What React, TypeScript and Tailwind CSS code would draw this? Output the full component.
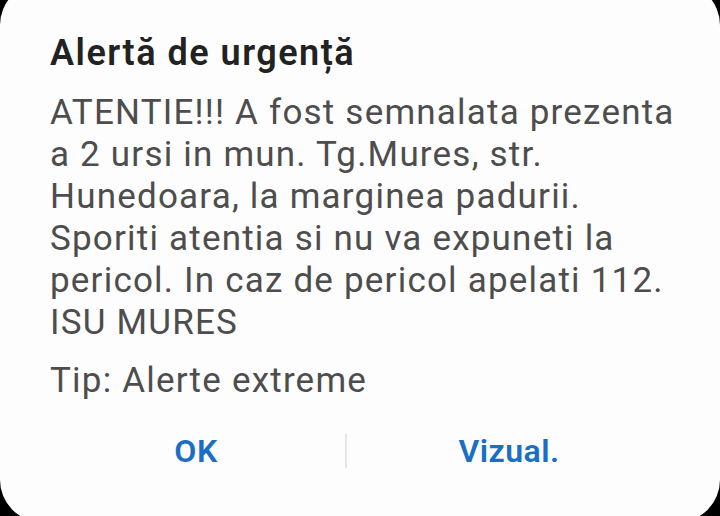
export default function App() {
  return (
    <div className="w-[720px] h-[516px] overflow-hidden bg-black">
      <div
        className="-mt-[17px] h-[539px] rounded-[42px] bg-[#fdfdfd] pt-[50px] pl-[50px]"
        style={{ fontFamily: 'Roboto, "Noto Sans", sans-serif' }}
      >
        <h1 className="text-[36px] leading-[40px] tracking-[1.5px] font-semibold text-[#222222] whitespace-nowrap">
          Alertă de urgență
        </h1>
        <p className="mt-[19px] text-[35px] leading-[42px] tracking-[1.2px] text-[#4d4d4d] whitespace-nowrap">
          ATENTIE!!! A fost semnalata prezenta
          <br />a 2 ursi in mun. Tg.Mures, str.
          <br />Hunedoara, la marginea padurii.
          <br />Sporiti atentia si nu va expuneti la
          <br />pericol. In caz de pericol apelati 112.
          <br />ISU MURES
        </p>
        <p className="mt-[16px] text-[35px] leading-[42px] tracking-[1.2px] text-[#4d4d4d]">
          Tip: Alerte extreme
        </p>
        <div className="mt-[24px] -ml-[3px] flex items-center">
          <button className="w-[298px] h-[50px] text-[32px] tracking-[0.5px] font-semibold text-[#1a6fc4]">
            OK
          </button>
          <div className="w-[2px] h-[34px] bg-[#e6e6e6]" />
          <button className="w-[324px] h-[50px] text-[32px] tracking-[0.5px] font-semibold text-[#1a6fc4]">
            Vizual.
          </button>
        </div>
      </div>
    </div>
  );
}
